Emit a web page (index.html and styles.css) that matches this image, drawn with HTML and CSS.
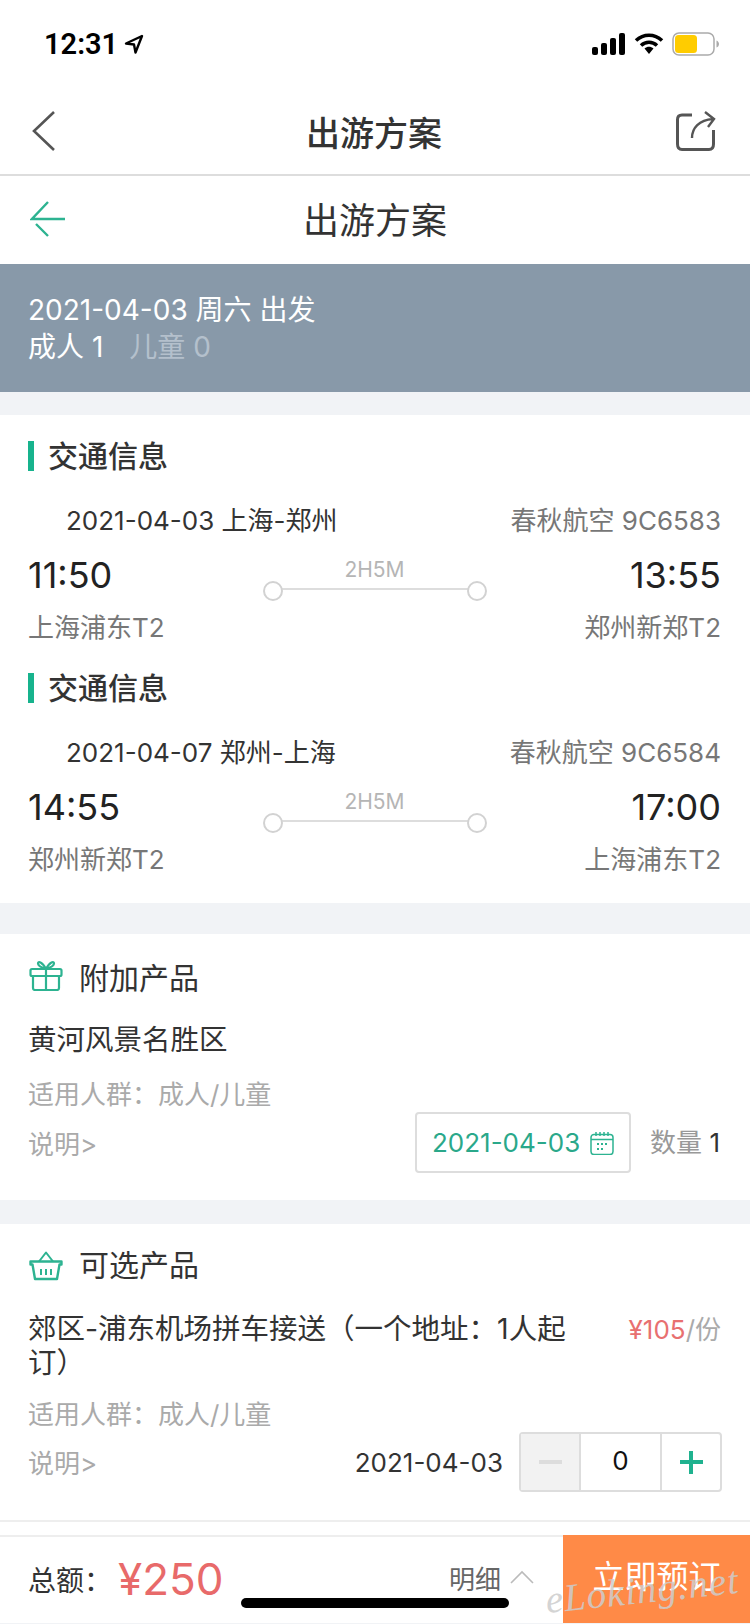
FILE: index.html
```html
<!DOCTYPE html>
<html lang="zh-CN">
<head>
	<meta charset="UTF-8">
	<title>出游方案</title>
	<link rel="stylesheet" href="styles.css">
</head>
<body>
<div class="page">
	<div class="status">
		<div class="status-time">12:31
			<svg class="status-loc" viewBox="0 0 20 20"><path d="M18 2 2 9.500l8 1 1.500 8z" fill="none" stroke="#000" stroke-width="2.400" stroke-linejoin="round"/></svg>
		</div>
		<div class="status-icons">
			<svg width="34" height="22" viewBox="0 0 34 22"><rect x="0" y="14" width="6" height="8" rx="2"/><rect x="9" y="10" width="6" height="12" rx="2"/><rect x="18" y="5" width="6" height="17" rx="2"/><rect x="27" y="0" width="6" height="22" rx="2"/></svg>
			<svg width="30" height="22" viewBox="0 0 30 22"><path d="M2 7.500C9.500 .5 20.500 .5 28 7.500M7 12.500c4.700-4.300 11.300-4.300 16 0" fill="none" stroke="#000" stroke-width="3.600"/><path d="M10.500 15.500c2.800-2.300 6.200-2.300 9 0L15 21z"/></svg>
			<svg width="47" height="24" viewBox="0 0 47 24"><rect x="1" y="1" width="41" height="22" rx="6" fill="#fff" stroke="#aaa" stroke-width="1.500"/><rect x="3" y="3" width="22" height="18" rx="3.500" fill="#fc0"/><path d="M44.500 8.500c1.500.5 2.500 2 2.500 3.500s-1 3-2.500 3.500z" fill="#aaa"/></svg>
		</div>
	</div>

	<div class="nav">
		<svg class="nav-back" width="24" height="40" viewBox="0 0 24 40"><path d="M22 1 2 20l20 19" fill="none" stroke="#555" stroke-width="2.600"/></svg>
		<div class="nav-title">出游方案</div>
		<svg class="nav-share" width="40" height="40" viewBox="0 0 40 40"><path d="M16 4H6Q1.500 4 1.500 8.500V33Q1.500 38.500 6 38.500H33Q37.500 38.500 37.500 33V19" fill="none" stroke="#555" stroke-width="3"/><path d="M16 27C16 17 23 9 37 8M29 1l9 7-6 8" fill="none" stroke="#555" stroke-width="2.400"/></svg>
	</div>

	<div class="subnav">
		<svg class="subnav-back" width="36" height="36" viewBox="0 0 36 36"><path d="M18 1 2 18h33M6 23l12 12" fill="none" stroke="#2db391" stroke-width="2.400"/></svg>
		<div class="subnav-title">出游方案</div>
	</div>

	<div class="banner">
		<div>2021-04-03 周六 出发</div>
		<div>成人 1<span class="banner-dim">儿童 0</span></div>
	</div>

	<div class="section section-flight">
		<div class="flight">
			<div class="flight-head">交通信息</div>
			<div class="flight-row flight-info">
				<span class="flight-date">2021-04-03 上海-郑州</span>
				<span class="flight-air">春秋航空 9C6583</span>
			</div>
			<div class="flight-times">
				<span class="time">11:50</span>
				<div class="route">
					<div class="route-len">2H5M</div>
					<div class="route-line"></div>
				</div>
				<span class="time time-r">13:55</span>
			</div>
			<div class="flight-row flight-port">
				<span>上海浦东T2</span>
				<span>郑州新郑T2</span>
			</div>
		</div>
		<div class="flight">
			<div class="flight-head">交通信息</div>
			<div class="flight-row flight-info">
				<span class="flight-date">2021-04-07 郑州-上海</span>
				<span class="flight-air">春秋航空 9C6584</span>
			</div>
			<div class="flight-times">
				<span class="time">14:55</span>
				<div class="route">
					<div class="route-len">2H5M</div>
					<div class="route-line"></div>
				</div>
				<span class="time time-r">17:00</span>
			</div>
			<div class="flight-row flight-port">
				<span>郑州新郑T2</span>
				<span>上海浦东T2</span>
			</div>
		</div>
	</div>

	<div class="section section-extra">
		<div class="prod-head">
			<svg width="34" height="30" viewBox="0 0 34 30"><g fill="none" stroke="#2db391" stroke-width="2.200" stroke-linejoin="round"><rect x="1.500" y="8" width="31" height="7" rx="1.500"/><path d="M4 15v12q0 2 2 2h22q2 0 2-2V15M17 8v21M17 8c-3-1-8-3-8-5.500S13 .5 17 8c4-7.500 8-8 8-5.500S20 7 17 8"/></g></svg>
			<span>附加产品</span>
		</div>
		<div class="prod-name">黄河风景名胜区</div>
		<div class="prod-meta">适用人群：成人/儿童</div>
		<div class="prod-actions">
			<span class="prod-link">说明&gt;</span>
			<div class="prod-right">
				<div class="date-box">2021-04-03
					<svg width="24" height="24" viewBox="0 0 24 24"><g fill="none" stroke="#2db391" stroke-width="1.500"><rect x="1" y="3.500" width="22" height="20" rx="3"/><path d="M6 1v4M10 1v4M14 1v4M18 1v4M1 8.500h22" /><path d="M7 13h2M11 13h2M15 13h2M7 18h2M11 18h2" stroke-width="1.800"/></g></svg>
				</div>
				<span class="qty"><span class="qty-label">数量</span> 1</span>
			</div>
		</div>
	</div>

	<div class="section section-option">
		<div class="prod-head prod-head-opt">
			<svg width="34" height="30" viewBox="0 0 34 30"><g fill="none" stroke="#2db391" stroke-width="2.400" stroke-linejoin="round"><path d="M1.500 10.500h31v3h-2L28 28H6L3.500 13.500h-2z"/><path d="M10 10.500 17 1.500l7 9M12 18v6M17 18v6M22 18v6" stroke-width="2"/></g></svg>
			<span>可选产品</span>
		</div>
		<div class="opt-row">
			<div class="opt-name">郊区-浦东机场拼车接送（一个地址：1人起订）</div>
			<div class="opt-price"><span class="opt-red">¥105</span>/份</div>
		</div>
		<div class="prod-meta prod-meta-opt">适用人群：成人/儿童</div>
		<div class="prod-actions prod-actions-opt">
			<span class="prod-link">说明&gt;</span>
			<div class="prod-right">
				<span class="opt-date">2021-04-03</span>
				<div class="stepper">
					<div class="step step-off"><i class="step-bar"></i></div>
					<div class="step-num">0</div>
					<div class="step step-add"><i class="step-bar"></i><i class="step-bar step-bar-v"></i></div>
				</div>
			</div>
		</div>
	</div>

	<div class="gap"></div>

	<div class="footer">
		<div class="total">
			<span class="total-label">总额：</span>
			<span class="total-num">¥250</span>
		</div>
		<div class="detail">明细
			<svg width="24" height="14" viewBox="0 0 24 14"><path d="M1 13 12 2l11 11" fill="none" stroke="#bbb" stroke-width="1.600"/></svg>
		</div>
		<div class="book">立即预订</div>
	</div>

	<div class="home-bar"></div>
	<div class="mark">eLoking.net</div>
</div>
</body>
</html>
```
FILE: styles.css
```css
* {
	box-sizing: border-box;
}
body {
	margin: 0;
	background: #fff;
	font-family: Inter, "Noto Sans CJK SC", sans-serif;
	color: #333;
}
.page {
	position: relative;
	width: 750px;
	height: 1624px;
	overflow: hidden;
	background: #f1f3f6;
}

/* status bar */
.status {
	display: flex;
	justify-content: space-between;
	align-items: center;
	height: 88px;
	padding: 0 31px 0 44px;
	background: #fff;
}
.status-time {
	display: flex;
	align-items: center;
	gap: 6px;
	font-size: 29px;
	font-weight: 600;
	color: #000;
	font-family: Roboto, sans-serif;
}
.status-loc {
	width: 20px;
	height: 20px;
}
.status-icons {
	display: flex;
	align-items: center;
	gap: 8px;
}

/* navs */
.nav {
	display: grid;
	grid-template-columns: 1fr auto 1fr;
	align-items: center;
	height: 88px;
	padding: 0 34px 0 32px;
	background: #fff;
	border-bottom: 2px solid #ddd;
}
.nav-share {
	justify-self: end;
}
.nav-title {
	font-size: 34px;
	font-weight: 500;
	color: #333;
}
.subnav {
	position: relative;
	display: flex;
	justify-content: center;
	align-items: center;
	height: 88px;
	padding-bottom: 4px;
	background: #fff;
}
.subnav-back {
	position: absolute;
	left: 30px;
	top: 25px;
}
.subnav-title {
	font-size: 36px;
	color: #333;
}
.banner {
	height: 128px;
	padding: 28px 0 0 28px;
	margin-bottom: 23px;
	background: #8899a9;
	color: #fff;
	font-size: 28px;
	line-height: 37px;
}
.banner-dim {
	margin-left: 26px;
	color: #b4c0cc;
}

/* common */
.section {
	background: #fff;
	padding-left: 28px;
	padding-right: 29px;
}

/* flights */
.section-flight {
	padding-top: 26px;
	padding-bottom: 31px;
	margin-bottom: 31px;
}
.flight + .flight {
	margin-top: 33px;
}
.flight-head {
	height: 30px;
	border-left: 6px solid #17b38d;
	padding-left: 14px;
	line-height: 30px;
	font-size: 30px;
	font-weight: 500;
	color: #333;
}
.flight-row {
	display: flex;
	justify-content: space-between;
	align-items: center;
	height: 30px;
	font-size: 26px;
}
.flight-info {
	margin-top: 32px;
}
.flight-date {
	margin-left: 38px;
	color: #333;
}
.flight-air {
	color: #777;
}
.flight-times {
	display: grid;
	grid-template-columns: 1fr 224px 1fr;
	align-items: center;
	height: 60px;
	margin-top: 12px;
}
.time {
	font-size: 36px;
	color: #222;
}
.time-r {
	text-align: right;
}
.route {
	height: 60px;
	padding-top: 12px;
}
.route-len {
	height: 25px;
	line-height: 25px;
	text-align: center;
	font-size: 21px;
	color: #b5b5b5;
}
.route-line {
	position: relative;
	height: 2px;
	margin: 6px 8px 0;
	background: #ddd;
}
.route-line::before,
.route-line::after {
	content: "";
	position: absolute;
	top: -7px;
	width: 16px;
	height: 16px;
	border: 2px solid #d2d2d2;
	border-radius: 50%;
	background: #fff;
}
.route-line::before {
	left: -8px;
}
.route-line::after {
	right: -8px;
}
.flight-port {
	margin-top: 5px;
	color: #777;
}

/* products */
.section-extra {
	padding-top: 27px;
	padding-bottom: 27px;
	margin-bottom: 24px;
}
.section-option {
	padding-top: 27px;
	padding-bottom: 28px;
	border-bottom: 2px solid #eee;
}
.prod-head {
	display: flex;
	align-items: center;
	gap: 16px;
	height: 30px;
	font-size: 30px;
	color: #333;
}
.prod-head svg {
	margin-left: 1px;
}
.prod-head-opt span {
	margin-top: -6px;
}
.prod-name {
	margin-top: 29px;
	height: 40px;
	line-height: 40px;
	font-size: 28.500px;
	color: #333;
}
.prod-meta {
	margin-top: 18px;
	height: 34px;
	line-height: 34px;
	font-size: 26px;
	color: #aaa;
}
.prod-actions {
	display: flex;
	justify-content: space-between;
	align-items: center;
	height: 61px;
}
.prod-link {
	margin-top: -1px;
	font-size: 26px;
	color: #aaa;
}
.prod-right {
	display: flex;
	align-items: center;
}
.date-box {
	display: flex;
	justify-content: center;
	align-items: center;
	gap: 10px;
	width: 216px;
	height: 61px;
	border: 2px solid #ddd;
	border-radius: 4px;
	font-size: 26px;
	color: #2aa88a;
}
.qty {
	margin: -5px 1px 0 19px;
	font-size: 26px;
	color: #333;
}
.qty-label {
	color: #999;
}

/* optional item */
.opt-row {
	display: flex;
	justify-content: space-between;
	margin-top: 31px;
}
.opt-name {
	width: 560px;
	font-size: 28.500px;
	line-height: 34px;
	color: #333;
}
.opt-price {
	font-size: 26px;
	line-height: 36px;
	color: #aaa;
}
.opt-red {
	color: #e87070;
}
.prod-actions-opt {
	height: 60px;
}
.prod-actions-opt .prod-right {
	margin-right: -1px;
}
.opt-date {
	margin-right: 16px;
	font-size: 26px;
	color: #333;
}
.stepper {
	display: flex;
	width: 203px;
	height: 60px;
	border: 2px solid #ddd;
	border-radius: 4px;
}
.step {
	position: relative;
	display: flex;
	justify-content: center;
	align-items: center;
	width: 58px;
}
.step-off {
	background: #f2f2f2;
}
.step-num {
	flex: 1;
	border-left: 2px solid #ddd;
	border-right: 2px solid #ddd;
	text-align: center;
	line-height: 54px;
	font-size: 26px;
	color: #111;
}
.step-bar {
	display: block;
	width: 23px;
	height: 4px;
	background: #ddd;
}
.step-add .step-bar {
	background: #1fb28f;
}
.step-add .step-bar-v {
	position: absolute;
	width: 4px;
	height: 23px;
}
.gap {
	height: 13px;
	background: #fff;
}

/* footer */
.footer {
	display: flex;
	height: 88px;
	border-top: 2px solid #eee;
	background: #fff;
}
.total {
	display: flex;
	align-items: center;
	width: 420px;
	height: 84px;
	padding-left: 28px;
}
.total-label {
	width: 90px;
	font-size: 28px;
	color: #333;
}
.total-num {
	font-size: 44px;
	color: #e86a6a;
}
.detail {
	display: flex;
	align-items: center;
	gap: 9px;
	width: 143px;
	height: 80px;
	padding-left: 29px;
	font-size: 26px;
	color: #666;
}
.book {
	display: flex;
	justify-content: center;
	align-items: center;
	flex: 1;
	margin-top: -2px;
	padding-bottom: 10px;
	background: #ff8a47;
	color: #fff;
	font-size: 32px;
}
.home-bar {
	position: absolute;
	left: 241px;
	top: 1598px;
	width: 268px;
	height: 10px;
	border-radius: 5px;
	background: #000;
}
.mark {
	position: absolute;
	left: 545px;
	top: 1567px;
	font-family: "Liberation Serif", serif;
	font-style: italic;
	font-size: 39px;
	letter-spacing: 1px;
	color: rgba(205, 205, 205, 0.85);
	transform: rotate(-6deg);
}
```
